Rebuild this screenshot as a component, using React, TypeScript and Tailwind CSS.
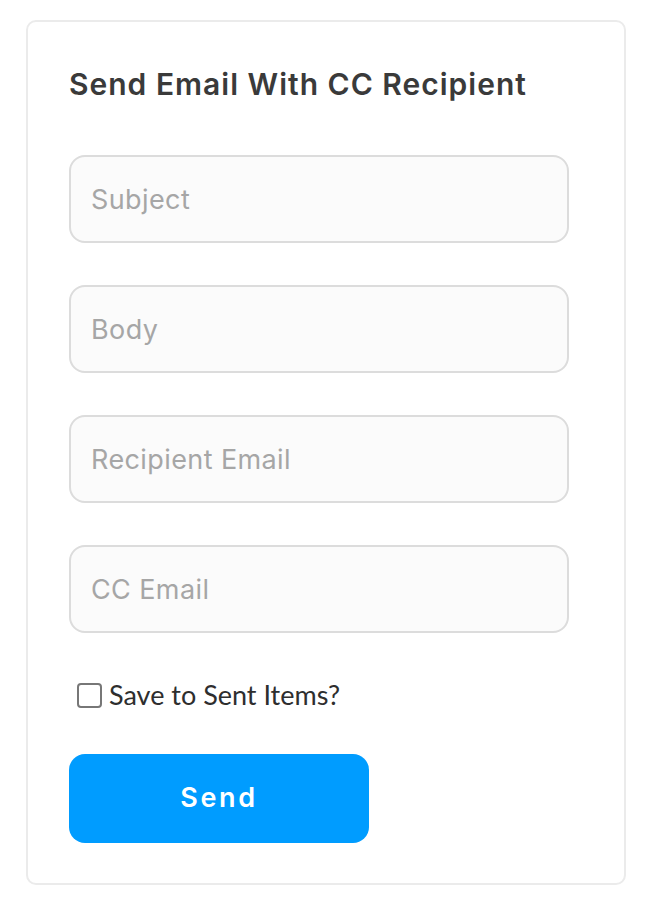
import React from "react";

const fields = ["Subject", "Body", "Recipient Email", "CC Email"];

export default function App() {
  return (
    <div className="min-h-screen bg-white pl-[26px] pt-[20px]" style={{ fontFamily: "Inter, sans-serif" }}>
      <div className="w-[600px] h-[865px] rounded-[10px] border-2 border-[#ebebeb] px-[41px] pt-[42px]">
        <h1 className="text-[30px] leading-[40px] font-semibold text-[#3a3a3a] tracking-[1px]">
          Send Email With CC Recipient
        </h1>
        <div className="mt-[51px] flex flex-col gap-[42px]">
          {fields.map((f) => (
            <input
              key={f}
              placeholder={f}
              className="block box-border w-[500px] h-[88px] rounded-[16px] border-2 border-[#dcdcdc] bg-[#fbfbfb] px-[20px] text-[27px] tracking-[0.4px] text-[#333] placeholder:text-[#a6a6a6] outline-none"
            />
          ))}
        </div>
        <label
          className="mt-[44px] flex items-center gap-[7px] pl-[8px] text-[27px] leading-[36px] text-[#2e2e2e]"
          style={{ fontFamily: "Lato, sans-serif" }}
        >
          <input type="checkbox" className="w-[25px] h-[25px] appearance-none rounded-[4px] border-2 border-[#777] bg-white" />
          Save to Sent Items?
        </label>
        <button className="mt-[41px] block w-[300px] h-[89px] rounded-[16px] bg-[#009cff] text-white text-[27px] font-semibold tracking-[2.6px]">
          Send
        </button>
      </div>
    </div>
  );
}
